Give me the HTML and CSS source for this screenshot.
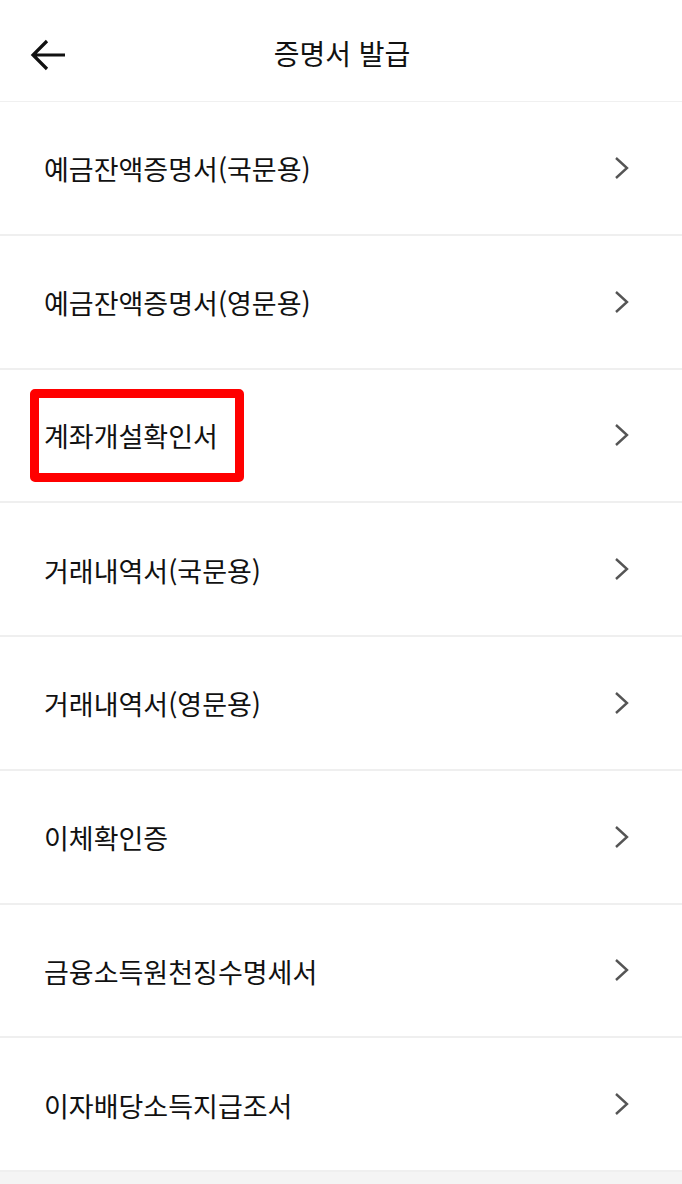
FILE: index.html
```html
<!DOCTYPE html>
<html lang="ko">
<head>
    <meta charset="UTF-8">
    <meta name="viewport" content="width=device-width, initial-scale=1.0">
    <title>증명서 발급</title>
    <link rel="stylesheet" href="styles.css">
</head>
<body>
    <header class="top-bar">
        <button class="back-btn" aria-label="뒤로">
            <svg width="38" height="34" viewBox="0 0 38 34">
                <path d="M36 17H4M18 3L4 17l14 14" fill="none" stroke="#111" stroke-width="3.2" stroke-linecap="butt"/>
            </svg>
        </button>
        <h1 class="title">증명서 발급</h1>
    </header>

    <ul class="cert-list">
        <li class="cert-item"><span class="label">예금잔액증명서(국문용)</span><svg class="chevron" viewBox="0 0 16 24"><path d="M2 2l11 10L2 22"/></svg></li>
        <li class="cert-item"><span class="label">예금잔액증명서(영문용)</span><svg class="chevron" viewBox="0 0 16 24"><path d="M2 2l11 10L2 22"/></svg></li>
        <li class="cert-item"><span class="label highlight">계좌개설확인서</span><svg class="chevron" viewBox="0 0 16 24"><path d="M2 2l11 10L2 22"/></svg></li>
        <li class="cert-item"><span class="label">거래내역서(국문용)</span><svg class="chevron" viewBox="0 0 16 24"><path d="M2 2l11 10L2 22"/></svg></li>
        <li class="cert-item"><span class="label">거래내역서(영문용)</span><svg class="chevron" viewBox="0 0 16 24"><path d="M2 2l11 10L2 22"/></svg></li>
        <li class="cert-item"><span class="label">이체확인증</span><svg class="chevron" viewBox="0 0 16 24"><path d="M2 2l11 10L2 22"/></svg></li>
        <li class="cert-item"><span class="label">금융소득원천징수명세서</span><svg class="chevron" viewBox="0 0 16 24"><path d="M2 2l11 10L2 22"/></svg></li>
        <li class="cert-item"><span class="label">이자배당소득지급조서</span><svg class="chevron" viewBox="0 0 16 24"><path d="M2 2l11 10L2 22"/></svg></li>
    </ul>
</body>
</html>
```

FILE: styles.css
```css
body {
    margin: 0;
    background-color: #f4f4f4;
    font-family: 'Noto Sans CJK KR', 'Noto Sans', sans-serif;
    color: #111;
}

.top-bar {
    height: 101px;
    background-color: white;
    border-bottom: 1px solid #f0f0f0;
    display: flex;
    align-items: center;
    justify-content: center;
    position: relative;
}

.back-btn {
    position: absolute;
    left: 29px;
    top: 38px;
    padding: 0;
    border: none;
    background: none;
    display: flex;
}

.title {
    margin: 0;
    font-size: 28px;
    font-weight: 400;
    line-height: 1;
    padding-top: 4px;
    padding-left: 2px;
}

.cert-list {
    list-style: none;
    margin: 0;
    padding: 0;
    background-color: white;
}

.cert-item {
    height: 131.75px;
    border-bottom: 2px solid #efefef;
    display: flex;
    align-items: center;
    justify-content: space-between;
    padding: 0 52px 0 44px;
}

.label {
    font-size: 27px;
    line-height: 1;
    padding-top: 2px;
}

.highlight {
    border: 9px solid #ff0000;
    border-radius: 5px;
    margin-left: -14px;
    padding: 24px 17px 24px 5px;
}

.chevron {
    width: 16px;
    height: 24px;
    fill: none;
    stroke: #555;
    stroke-width: 2.4;
}
```
